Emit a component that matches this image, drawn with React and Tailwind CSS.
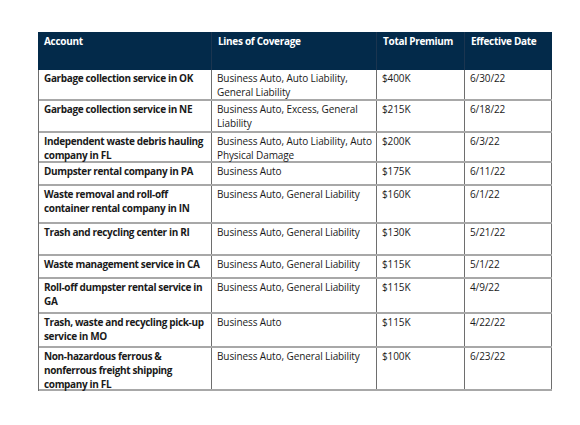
import React from "react";

const rows = [
  { a: "Garbage collection service in OK", l: "Business Auto, Auto Liability, General Liability", p: "$400K", d: "6/30/22", h: "h-[31px]" },
  { a: "Garbage collection service in NE", l: "Business Auto, Excess, General Liability", p: "$215K", d: "6/18/22", h: "h-[32px]" },
  { a: "Independent waste debris hauling company in FL", l: "Business Auto, Auto Liability, Auto Physical Damage", p: "$200K", d: "6/3/22", h: "h-[30px]" },
  { a: "Dumpster rental company in PA", l: "Business Auto", p: "$175K", d: "6/11/22", h: "h-[23px]" },
  { a: "Waste removal and roll-off container rental company in IN", l: "Business Auto, General Liability", p: "$160K", d: "6/1/22", h: "h-[38px]" },
  { a: "Trash and recycling center in RI", l: "Business Auto, General Liability", p: "$130K", d: "5/21/22", h: "h-[32px]" },
  { a: "Waste management service in CA", l: "Business Auto, General Liability", p: "$115K", d: "5/1/22", h: "h-[23px]" },
  { a: "Roll-off dumpster rental service in GA", l: "Business Auto, General Liability", p: "$115K", d: "4/9/22", h: "h-[35px]" },
  { a: "Trash, waste and recycling pick-up service in MO", l: "Business Auto", p: "$115K", d: "4/22/22", h: "h-[34px]" },
  { a: "Non-hazardous ferrous & nonferrous freight shipping company in FL", l: "Business Auto, General Liability", p: "$100K", d: "6/23/22", h: "h-[43px]" },
];

export default function App() {
  return (
    <div className="w-[580px] h-[425px] bg-white pt-[32px] pl-[38px]" style={{ fontFamily: '"Open Sans", sans-serif' }}>
      <div className="w-[514px] text-[10px] leading-[14px] text-[#1a1a1a]">
        <div className="flex h-[38px] bg-[#032a4a] text-white font-bold tracking-[-0.3px]">
          <div className="w-[174px] pl-[6px] pt-[2px] border-r border-[#1b3550]">Account</div>
          <div className="w-[165px] pl-[6px] pt-[2px] border-r border-[#1b3550]">Lines of Coverage</div>
          <div className="w-[88px] pl-[6px] pt-[2px] border-r border-[#1b3550]">Total Premium</div>
          <div className="w-[87px] pl-[6px] pt-[2px]">Effective Date</div>
        </div>
        <div className="border-l border-[#6e6e6e]">
          {rows.map((r, i) => (
            <div key={i} className={`flex ${r.h} border-b-2 border-[#a8a8a8]`}>
              <div className="w-[173px] shrink-0 pl-[5px] pr-[2px] pt-px font-bold tracking-[-0.35px] border-r border-[#6e6e6e]">{r.a}</div>
              <div className="w-[165px] shrink-0 pl-[5px] pr-px pt-px tracking-[-0.1px] border-r border-[#6e6e6e]">{r.l}</div>
              <div className="w-[88px] shrink-0 pl-[5px] pr-[2px] pt-px tracking-[-0.1px] border-r border-[#6e6e6e]">{r.p}</div>
              <div className="w-[87px] shrink-0 pl-[5px] pr-[2px] pt-px tracking-[-0.1px] border-r border-[#6e6e6e]">{r.d}</div>
            </div>
          ))}
        </div>
      </div>
    </div>
  );
}
